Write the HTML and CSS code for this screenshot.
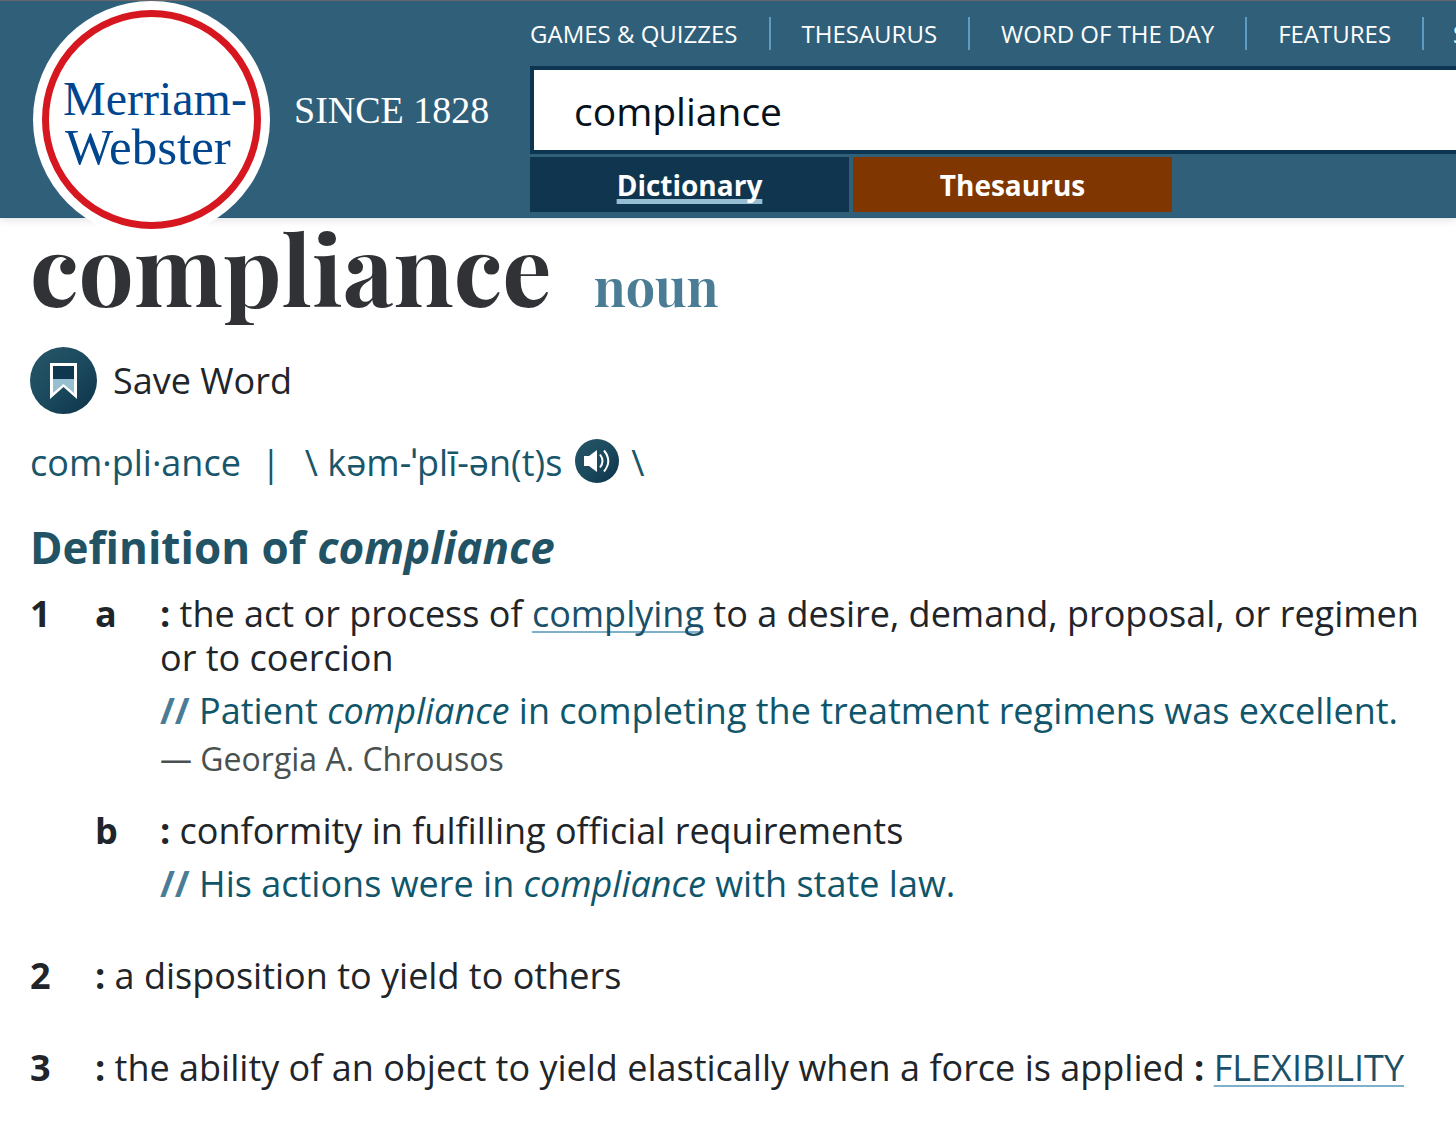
FILE: index.html
```html
<!DOCTYPE html>
<html lang="en">
<head>
<meta charset="utf-8">
<title>Compliance Definition &amp; Meaning - Merriam-Webster</title>
<link rel="stylesheet" href="styles.css">
</head>
<body>
<header class="site-header">
  <div class="brand">
    <a class="logo" href="#"><span class="logo-ring"><span>Merriam-</span><span class="logo-second">Webster</span></span></a>
    <span class="since">SINCE 1828</span>
  </div>
  <div class="header-main">
    <nav class="top-nav" aria-label="Main">
      <a href="#">GAMES &amp; QUIZZES</a>
      <a href="#">THESAURUS</a>
      <a href="#">WORD OF THE DAY</a>
      <a href="#">FEATURES</a>
      <a href="#">SHOP</a>
    </nav>
    <input class="search" type="text" value="compliance" aria-label="Search the dictionary">
    <div class="tabs">
      <button class="tab tab-dictionary" type="button"><span>Dictionary</span></button>
      <button class="tab tab-thesaurus" type="button"><span>Thesaurus</span></button>
    </div>
  </div>
</header>
<main class="entry">
  <div class="headword">
    <h1>compliance</h1>
    <a class="pos" href="#">noun</a>
  </div>
  <button class="save" type="button">
    <svg width="67" height="67" viewBox="0 0 67 67" aria-hidden="true">
      <defs><linearGradient id="disc" x1="0" y1="0" x2="1" y2="1"><stop offset="0" stop-color="#265667"/><stop offset="0.5" stop-color="#1b4a5e"/><stop offset="1" stop-color="#0d324a"/></linearGradient></defs>
      <circle cx="33.500" cy="33.500" r="33.500" fill="url(#disc)"/>
      <path d="M20 16H47V52L33.500 40L20 52Z" fill="#fff"/>
      <path d="M23 19H44V32H23Z" fill="#0f3850"/>
      <path d="M23 32H44V46L33.500 37L23 46Z" fill="#97bfd0"/>
    </svg>
    <span>Save Word</span>
  </button>
  <div class="pronunciation">
    <span>com·pli·ance</span>
    <span class="bar">|</span>
    <span>\ kəm-ˈplī-ən(t)s</span>
    <button class="audio" type="button" aria-label="Listen">
      <svg width="44" height="44" viewBox="0 0 44 44" aria-hidden="true">
        <circle cx="22" cy="22" r="22" fill="url(#disc)"/>
        <path d="M9 17H14L22 11V33L14 27H9Z" fill="#fff"/>
        <path d="M25 15.500Q30 22 25 28.500M29 11.500Q37.500 22 29 32.500" fill="none" stroke="#fff" stroke-width="2"/>
      </svg>
    </button>
    <span>\</span>
  </div>
  <h2>Definition of <em>compliance</em></h2>
  <section class="sense">
    <span class="num">1</span>
    <span class="num">a</span>
    <div>
      <p><b>:</b> the act or process of <a href="#">complying</a> to a desire, demand, proposal, or regimen or to coercion</p>
      <p class="example"><b>//</b> Patient <em>compliance</em> in completing the treatment regimens was excellent.</p>
      <p class="source">— Georgia A. Chrousos</p>
    </div>
  </section>
  <section class="sense sense-next">
    <span class="num sub">b</span>
    <div>
      <p><b>:</b> conformity in fulfilling official requirements</p>
      <p class="example"><b>//</b> His actions were in <em>compliance</em> with state law.</p>
    </div>
  </section>
  <section class="sense sense-main">
    <span class="num">2</span>
    <p class="wide"><b>:</b> a disposition to yield to others</p>
  </section>
  <section class="sense sense-main">
    <span class="num">3</span>
    <p class="wide"><b>:</b> the ability of an object to yield elastically when a force is applied <b>:</b> <a href="#">FLEXIBILITY</a></p>
  </section>
</main>
</body>
</html>
```
FILE: styles.css
```css
* { box-sizing: border-box; }
body, h1, h2, p { margin: 0; }
body {
  background: #fff;
  color: #212529;
  font: 36px/44px "Open Sans", "Noto Sans", sans-serif;
  overflow-x: hidden;
}
button { padding: 0; border: 0; background: none; color: inherit; font: inherit; cursor: pointer; }
svg { display: block; }

.site-header {
  display: flex;
  height: 218px;
  padding-left: 33px;
  background: #305f7a;
  border-top: 1px solid #6a6568;
  border-bottom: 1px solid #265a78;
  box-shadow: 0 2px 8px rgba(0, 0, 0, 0.12);
}
.brand { display: flex; flex: none; width: 497px; gap: 24px; }
.logo {
  flex: none;
  width: 237px;
  height: 237px;
  padding: 9px;
  border-radius: 50%;
  background: #fff;
  text-decoration: none;
}
.logo-ring {
  display: flex;
  flex-direction: column;
  justify-content: center;
  width: 219px;
  height: 219px;
  padding: 6px 0 0 14px;
  border: 7px solid #d7171f;
  border-radius: 50%;
  color: #00468f;
  font: 48px/49px "Liberation Serif", serif;
  white-space: nowrap;
}
.logo-second { padding-left: 2px; font-size: 51px; }
.since { padding-top: 87px; color: #fff; font: 38px/44px "Liberation Serif", serif; white-space: nowrap; }
.header-main { flex: 1; min-width: 0; overflow: hidden; }
.top-nav { display: flex; height: 65px; align-items: center; }
.top-nav a {
  flex: none;
  padding: 0 31px;
  border-right: 2px solid #5d9cc3;
  color: #fff;
  font-size: 24px;
  line-height: 33px;
  text-decoration: none;
}
.top-nav a:first-child { padding-left: 0; }
.top-nav a:last-child { padding-left: 29px; border: 0; }
.search {
  display: block;
  width: 100%;
  height: 88px;
  padding: 0 40px;
  border: 4px solid #0b3550;
  border-right: 0;
  border-radius: 0;
  background: #fff;
  color: #08121c;
  font: 39px/54px "Open Sans", "Noto Sans", sans-serif;
  outline: 0;
}
.tabs { display: flex; gap: 4px; padding-top: 3px; }
.tab { width: 319px; height: 55px; color: #fff; font-size: 28px; font-weight: 700; line-height: 32px; }
.tab-dictionary { background: #10364f; }
.tab-dictionary span { text-decoration: underline 5px #97bfd4; text-underline-offset: 3px; text-decoration-skip-ink: none; }
.tab-thesaurus { background: #803600; }

.entry { padding: 0 24px 38px 30px; }
.headword { display: flex; align-items: baseline; gap: 42px; font-family: "Playfair Display", "Liberation Serif", serif; }
h1 { color: #303236; font-size: 98px; font-weight: 700; line-height: 98px; }
.pos { color: #4a7d95; font-size: 52px; font-weight: 700; line-height: 64px; text-decoration: none; }
.save { display: flex; align-items: center; gap: 16px; margin-top: 29px; }
.pronunciation { display: flex; align-items: center; height: 44px; margin-top: 27px; color: #19566a; }
.bar { padding: 0 24px 0 20px; }
.audio { margin: 0 12px 4px 13px; }
h2 { margin-top: 34px; color: #215365; font-size: 44px; font-weight: 700; line-height: 56px; }
.sense { display: grid; grid-template-columns: 65px 65px 1fr; }
h2 + .sense { margin-top: 17px; }
.sense-next { margin-top: 28px; }
.sense-main { margin-top: 48px; }
.num { font-weight: 700; }
.sub { grid-column: 2; }
.wide { grid-column: 2 / 4; }
.sense a { color: #1b5068; text-decoration: underline 2px #7fb0cb; text-underline-offset: 4px; text-decoration-skip-ink: none; }
.example { margin-top: 9px; color: #10566b; }
.example b { color: #4a7d95; }
.source { margin-top: 4px; color: #48514f; font-size: 32px; }
```
